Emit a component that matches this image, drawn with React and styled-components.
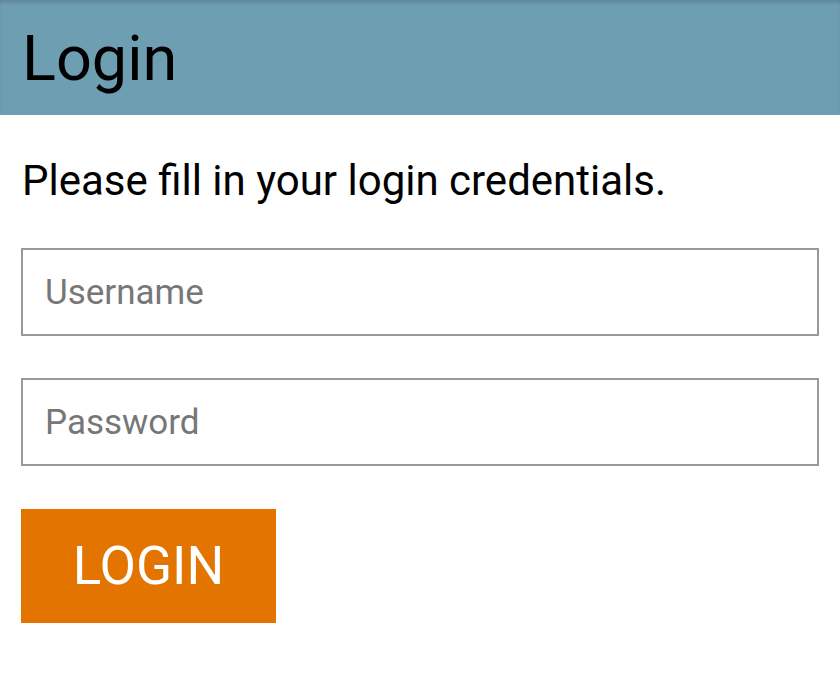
import React from "react";
import styled, { createGlobalStyle } from "styled-components";

const GlobalStyle = createGlobalStyle`
  html, body {
    margin: 0;
    padding: 0;
    background: #ffffff;
    font-family: Roboto, "Liberation Sans", sans-serif;
  }
`;

const Page = styled.div`
  width: 840px;
  min-height: 688px;
  background: #ffffff;
`;

const Header = styled.header`
  height: 115px;
  background: #6e9eb2;
  box-shadow: inset 0 4px 4px -2px rgba(0, 0, 0, 0.18);
  display: flex;
  align-items: center;
  padding: 0 22px;
  box-sizing: border-box;
`;

const Title = styled.h1`
  margin: 0;
  font-size: 63px;
  font-weight: 400;
  color: #000000;
  line-height: 1;
  padding-top: 2px;
`;

const Content = styled.main`
  padding: 41px 21px 0;
  display: flex;
  flex-direction: column;
  align-items: flex-start;
`;

const Intro = styled.p`
  margin: 0 0 42px 1px;
  font-size: 42px;
  line-height: 50px;
  color: #000000;
`;

const Field = styled.input`
  box-sizing: border-box;
  width: 798px;
  height: 88px;
  margin: 0 0 42px;
  padding: 0 22px;
  border: 2px solid #999999;
  border-radius: 0;
  font-family: inherit;
  font-size: 35px;
  color: #222222;
  background: #ffffff;
  outline: none;

  &::placeholder {
    color: #777777;
  }
`;

const Button = styled.button`
  width: 255px;
  height: 114px;
  border: none;
  border-radius: 0;
  background: #e37400;
  color: #ffffff;
  font-family: inherit;
  font-size: 53px;
  font-weight: 400;
  text-transform: uppercase;
  cursor: pointer;
  padding: 0;
  margin-top: 1px;
`;

const App = () => (
  <Page>
    <GlobalStyle />
    <Header>
      <Title>Login</Title>
    </Header>
    <Content>
      <Intro>Please fill in your login credentials.</Intro>
      <Field type="text" placeholder="Username" />
      <Field type="password" placeholder="Password" />
      <Button type="button">Login</Button>
    </Content>
  </Page>
);

export default App;
